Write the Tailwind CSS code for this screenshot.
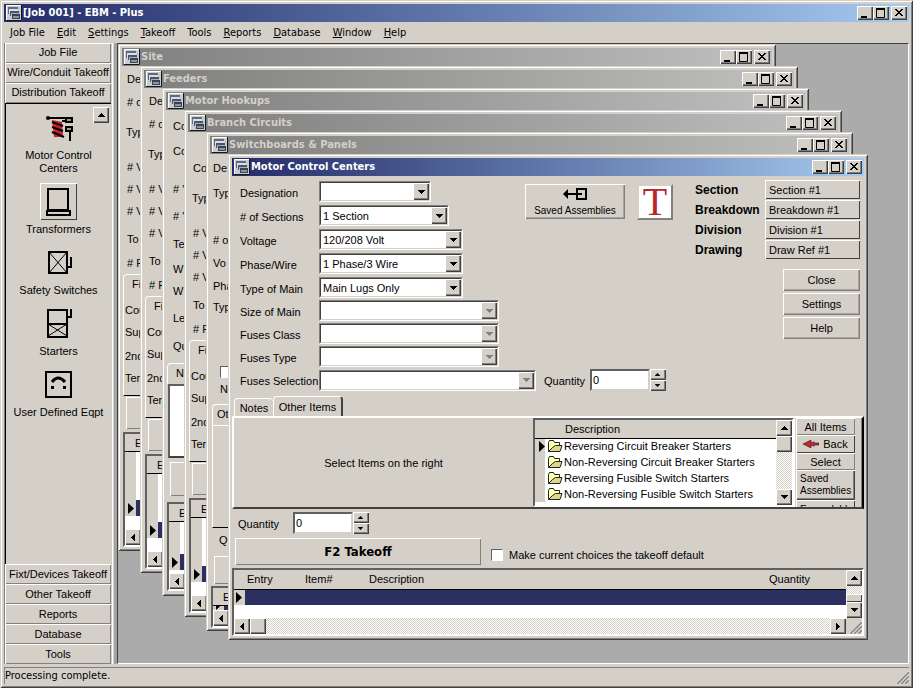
<!DOCTYPE html>
<html lang="en">
<head>
<meta charset="utf-8">
<title>[Job 001] - EBM - Plus</title>
<script src="https://cdn.jsdelivr.net/npm/@tailwindcss/browser@4"></script>
</head>
<body class="h-screen overflow-hidden bg-[#d4d0c8] font-['Liberation_Sans',Arial,sans-serif] text-[11px] leading-[14px] text-black">

<!-- Shared icons -->
<svg class="hidden" aria-hidden="true">
  <symbol id="form" viewBox="0 0 16 16"><path fill="#c9ccd0" d="M0 0h16v16H0z"/><path fill="none" stroke="#fff" d="M.5 15V.5H15"/><path fill="none" stroke="#15151c" d="M15.500 0v15.500H0"/><path fill="#5f6a80" d="M2 2h10v2H2zM2 4h1v5H2z"/><path fill="#dcdfe3" d="M3 4h9v4H3z"/><path fill="#4a5468" d="M4 6h9v2H4zM4 8h1v3H4z"/><path fill="#a9b0bc" d="M5 8h8v2H5z"/><path fill="#39424f" d="M6 9h8v2H6zM6 11h1v3H6zM13 11h1v3h-1zM7 13h6v1H7z"/><path fill="#8b94a3" d="M7 11h6v2H7z"/></symbol>
  <symbol id="min" viewBox="0 0 16 14"><path d="M4 10h6v2H4z"/></symbol>
  <symbol id="max" viewBox="0 0 16 14"><path fill="none" stroke="#000" d="M3.500 3v8.500h8V3"/><path d="M3 2h9v2H3z"/></symbol>
  <symbol id="cls" viewBox="0 0 16 14"><path d="M4 3h2v1h1v1h2V4h1V3h2v1h-1v1h-1v1H9v1h1v1h1v1h1v1h-2V9H9V8H7v1H6v1H4V9h1V8h1V7h1V6H6V5H5V4H4z"/></symbol>
  <symbol id="dn" viewBox="0 0 7 4"><path d="M0 0h7v1H6v1H5v1H4v1H3V3H2V2H1V1H0z"/></symbol>
  <symbol id="up" viewBox="0 0 7 4"><path d="M0 4h7V3H6V2H5V1H4V0H3v1H2v1H1v1H0z"/></symbol>
  <symbol id="lt" viewBox="0 0 4 7"><path d="M4 0v7H3V6H2V5H1V4H0V3h1V2h1V1h1V0z"/></symbol>
  <symbol id="rt" viewBox="0 0 4 7"><path d="M0 0v7h1V6h1V5h1V4h1V3H3V2H2V1H1V0z"/></symbol>
  <symbol id="row" viewBox="0 0 6 11"><path d="M0 0l6 5.500L0 11z"/></symbol>
  <symbol id="folder" viewBox="0 0 16 14"><path fill="#ffffb0" stroke="#222" d="M1.500 12.500v-9l1-2h4l1 2h5v3"/><path fill="#dcd88c" stroke="#222" d="M1.500 12.500l4-4 3-2h6.500l-2 6z"/></symbol>
  <symbol id="grip" viewBox="0 0 14 14"><path stroke="#fff" d="M1 14L14 1M5 14l9-9M9 14l5-5"/><path stroke="#808080" stroke-width="1.500" d="M2 14L14 2M6 14l8-8M10 14l4-4"/></symbol>
</svg>

<div class="flex h-full flex-col p-1 shadow-[inset_1px_1px_#d4d0c8,inset_-1px_-1px_#404040,inset_2px_2px_#fff,inset_-2px_-2px_#808080]">
  <header>
    <div class="flex h-[18px] items-center bg-linear-to-r from-[#262c68] to-[#a6caf0] px-0.5" data-title="[Job 001] - EBM - Plus"></div>
    <nav class="flex h-[21px] items-center gap-3 px-1.5 font-['DejaVu_Sans_Condensed','Noto_Sans',sans-serif] text-[11px]">
      <a href="#"><u>J</u>ob File</a><a href="#"><u>E</u>dit</a><a href="#"><u>S</u>ettings</a><a href="#"><u>T</u>akeoff</a><a href="#">Tools</a><a href="#"><u>R</u>eports</a><a href="#"><u>D</u>atabase</a><a href="#"><u>W</u>indow</a><a href="#"><u>H</u>elp</a>
    </nav>
  </header>

  <div class="flex min-h-0 flex-1">
    <aside class="flex w-[108px] shrink-0 flex-col border-l border-[#808080] pr-px">
      <button class="h-5 shrink-0 pb-0.5 whitespace-nowrap shadow-[inset_1px_1px_#fff,inset_-1px_-1px_#808080]">Job File</button>
      <button class="h-5 shrink-0 pb-0.5 whitespace-nowrap shadow-[inset_1px_1px_#fff,inset_-1px_-1px_#808080]">Wire/Conduit Takeoff</button>
      <button class="h-5 shrink-0 pb-0.5 whitespace-nowrap shadow-[inset_1px_1px_#fff,inset_-1px_-1px_#808080]">Distribution Takeoff</button>
      <div class="relative flex flex-1 flex-col items-center gap-2 border-t border-l border-black pt-[7px]">
        <button aria-label="Scroll up" class="absolute top-[3px] right-0.5 grid size-4 place-items-center shadow-[inset_1px_1px_#fff,inset_-1px_-1px_#404040,inset_-2px_-2px_#808080]"><svg class="h-1 w-[7px]"><use href="#up"/></svg></button>
        <button class="flex flex-col items-center gap-0.5 leading-[13px]">
          <svg class="h-9 w-[37px]" viewBox="0 0 37 36"><path fill="#c8202c" d="M12 9l10 2 1 15h-9z"/><path stroke="#000" stroke-width="2" fill="none" d="M7 7h25M12 11l11 4M12 16l11 4M12 21l12 5M30 21v9M25 19h4M25 10h-3"/><circle cx="8" cy="7" r="2"/><path fill="#8fae62" stroke="#000" stroke-width="2" d="M26 7h6v4h-6zM26 16h6v4h-6z"/></svg>
          <span>Motor Control<br>Centers</span></button>
        <button class="flex flex-col items-center gap-0.5">
          <span class="size-[37px] shadow-[inset_1px_1px_#fff,inset_-1px_-1px_#404040]"><svg viewBox="0 0 37 37"><path fill="none" stroke="#000" stroke-width="2" d="M8 6h20v21H8zM7 28h23v4H7z"/></svg></span>
          <span>Transformers</span></button>
        <button class="flex flex-col items-center gap-0.5">
          <svg class="size-[37px]" viewBox="0 0 37 37"><path fill="none" stroke="#000" stroke-width="2" d="M9 8h18v21H9zM27 23h4V13"/><path fill="none" stroke="#000" d="M9 8l18 21M27 8L9 29"/></svg>
          <span>Safety Switches</span></button>
        <button class="flex flex-col items-center gap-0.5">
          <svg class="size-[37px]" viewBox="0 0 37 37"><path fill="none" stroke="#000" stroke-width="2" d="M8 5h19v27H8zM8 19h19M27 12h4V4"/><path fill="none" stroke="#000" d="M8 19l19 12M27 19L8 31"/></svg>
          <span>Starters</span></button>
        <button class="flex flex-col items-center gap-0.5 whitespace-nowrap">
          <svg class="size-[37px]" viewBox="0 0 37 37"><path fill="none" stroke="#000" stroke-width="2" d="M6 6h25v25H6z"/><path fill="none" stroke="#000" stroke-width="3" d="M12 16q6-8 13 0"/><path d="M11 20h3v3h-3zM23 20h3v3h-3z"/></svg>
          <span>User Defined Eqpt</span></button>
      </div>
      <button class="h-5 shrink-0 whitespace-nowrap shadow-[inset_1px_1px_#fff,inset_-1px_-1px_#808080]">Fixt/Devices Takeoff</button>
      <button class="h-5 shrink-0 whitespace-nowrap shadow-[inset_1px_1px_#fff,inset_-1px_-1px_#808080]">Other Takeoff</button>
      <button class="h-5 shrink-0 whitespace-nowrap shadow-[inset_1px_1px_#fff,inset_-1px_-1px_#808080]">Reports</button>
      <button class="h-5 shrink-0 whitespace-nowrap shadow-[inset_1px_1px_#fff,inset_-1px_-1px_#808080]">Database</button>
      <button class="h-5 shrink-0 whitespace-nowrap shadow-[inset_1px_1px_#fff,inset_-1px_-1px_#808080]">Tools</button>
    </aside>
    <div class="w-[5px] shrink-0 border-r-3 border-l border-r-[#a4a4a4] border-l-white"></div>

    <!-- Desktop holding the child windows -->
    <main class="relative flex-1 overflow-hidden border border-t-[#404040] border-r-white border-b-white border-l-[#404040] bg-[#ababab]">
      <div id="back"></div>

      <section class="absolute top-[110px] left-[110px] w-[640px] bg-[#d4d0c8] p-1 shadow-[inset_1px_1px_#d4d0c8,inset_-1px_-1px_#404040,inset_2px_2px_#fff,inset_-2px_-2px_#808080]">
        <div class="flex h-[18px] items-center bg-linear-to-r from-[#262c68] to-[#a6caf0] px-0.5" data-title="Motor Control Centers"></div>

        <div class="flex pt-1 pr-1 pl-2">
          <div class="flex flex-col gap-0.5 pt-px">
            <div class="flex flex-col gap-[3px] pb-px" id="fieldsA"></div>
            <div class="flex flex-col gap-0.5" id="fieldsB"></div>
          </div>
          <div class="ml-[26px] flex gap-3 pt-1">
            <button class="flex h-[35px] w-[100px] flex-col items-center justify-between pt-1 pb-px text-[10px] whitespace-nowrap shadow-[inset_1px_1px_#fff,inset_-1px_-1px_#808080,inset_-2px_-2px_#a8a49c]">
              <svg class="h-3 w-6" viewBox="0 0 24 12"><path d="M0 6l5-5v10z"/><path fill="none" stroke="#000" stroke-width="2" d="M4 6h15M14 1h9v10h-9z"/></svg>
              Saved Assemblies</button>
            <button class="grid size-9 place-items-center border-2 border-[#d4d0c8] border-r-[#808080] border-b-[#808080] bg-white font-['Liberation_Serif',serif] text-[40px] leading-8 text-[#b8252c]">T</button>
          </div>
          <div class="ml-auto flex flex-col items-end gap-2.5">
            <div class="grid grid-cols-[70px_95px] items-center gap-y-px">
              <b class="text-[12px]">Section</b><button class="h-[19px] px-1 text-left shadow-[inset_1px_1px_#fff,inset_-1px_-1px_#404040]">Section #1</button>
              <b class="text-[12px]">Breakdown</b><button class="h-[19px] px-1 text-left shadow-[inset_1px_1px_#fff,inset_-1px_-1px_#404040]">Breakdown #1</button>
              <b class="text-[12px]">Division</b><button class="h-[19px] px-1 text-left shadow-[inset_1px_1px_#fff,inset_-1px_-1px_#404040]">Division #1</button>
              <b class="text-[12px]">Drawing</b><button class="h-[19px] px-1 text-left shadow-[inset_1px_1px_#fff,inset_-1px_-1px_#404040]">Draw Ref #1</button>
            </div>
            <div class="flex w-[77px] flex-col gap-0.5">
              <button class="h-[22px] shadow-[inset_1px_1px_#fff,inset_-1px_-1px_#808080,inset_-2px_-2px_#a8a49c]">Close</button>
              <button class="h-[22px] shadow-[inset_1px_1px_#fff,inset_-1px_-1px_#808080,inset_-2px_-2px_#a8a49c]">Settings</button>
              <button class="h-[22px] shadow-[inset_1px_1px_#fff,inset_-1px_-1px_#808080,inset_-2px_-2px_#a8a49c]">Help</button>
            </div>
          </div>
        </div>
        <div class="flex items-center gap-2 pt-0.5 pl-2">
          <div id="fieldsC"></div>
          <div data-qty="qty1" class="flex items-center gap-[5px]"></div>
        </div>

        <!-- Tabs -->
        <div class="flex items-end pt-[5px]">
          <button class="ml-0.5 h-[18px] w-[39px] rounded-t-sm border-t border-l border-white">Notes</button>
          <button class="h-5 w-[70px] rounded-t-sm border-t border-r-2 border-l border-white border-r-[#404040]">Other Items</button>
        </div>
        <div class="flex h-[93px] overflow-hidden border-2 border-t-white border-r-black border-b-[#404040] border-l-white">
          <p class="flex flex-1 items-center justify-center">Select Items on the right</p>
          <div class="flex h-[89px] w-[261px] border-2 border-t-[#606060] border-r-white border-b-white border-l-[#606060] bg-white">
            <table class="w-full flex-1 border-collapse self-start">
              <thead><tr class="h-[18px] border-b border-black bg-[#d4d0c8]"><th class="w-2.5"></th><th class="pl-5 text-left font-normal">Description</th></tr></thead>
              <tbody>
                <tr class="h-4"><td class="bg-[#d4d0c8] pl-1"><svg class="h-[11px] w-1.5"><use href="#row"/></svg></td><td class="pl-0.5"><span class="flex items-center gap-px whitespace-nowrap"><svg class="h-3.5 w-4"><use href="#folder"/></svg>Reversing Circuit Breaker Starters</span></td></tr>
                <tr class="h-4"><td class="bg-[#d4d0c8]"></td><td class="pl-0.5"><span class="flex items-center gap-px whitespace-nowrap"><svg class="h-3.5 w-4"><use href="#folder"/></svg>Non-Reversing Circuit Breaker Starters</span></td></tr>
                <tr class="h-4"><td class="bg-[#d4d0c8]"></td><td class="pl-0.5"><span class="flex items-center gap-px whitespace-nowrap"><svg class="h-3.5 w-4"><use href="#folder"/></svg>Reversing Fusible Switch Starters</span></td></tr>
                <tr class="h-4"><td class="bg-[#d4d0c8]"></td><td class="pl-0.5"><span class="flex items-center gap-px whitespace-nowrap"><svg class="h-3.5 w-4"><use href="#folder"/></svg>Non-Reversing Fusible Switch Starters</span></td></tr>
              </tbody>
            </table>
            <div class="flex w-4 flex-col bg-[conic-gradient(#fff_25%,#d4d0c8_0_50%,#fff_0_75%,#d4d0c8_0)] bg-[length:2px_2px]">
              <button aria-label="Scroll up" class="grid h-4 place-items-center bg-[#d4d0c8] shadow-[inset_1px_1px_#fff,inset_-1px_-1px_#404040,inset_-2px_-2px_#808080]"><svg class="h-1 w-[7px]"><use href="#up"/></svg></button>
              <div class="h-4 bg-[#d4d0c8] shadow-[inset_1px_1px_#fff,inset_-1px_-1px_#404040,inset_-2px_-2px_#808080]"></div>
              <button aria-label="Scroll down" class="mt-auto grid h-4 place-items-center bg-[#d4d0c8] shadow-[inset_1px_1px_#fff,inset_-1px_-1px_#404040,inset_-2px_-2px_#808080]"><svg class="h-1 w-[7px]"><use href="#dn"/></svg></button>
            </div>
          </div>
          <div class="flex w-[61px] flex-col border-l border-white pl-px">
            <button class="h-[17px] shrink-0 shadow-[inset_1px_1px_#fff,inset_-1px_-1px_#808080]">All Items</button>
            <button class="flex h-[18px] shrink-0 items-center justify-center gap-1 shadow-[inset_1px_1px_#fff,inset_-1px_-1px_#404040]"><svg class="h-2 w-4" viewBox="0 0 16 8"><path fill="#c8202c" stroke="#222" stroke-width=".6" d="M0 4l8-4v2.500h2l1-1v1.500h5v2h-5v1.500l-1-1H8V8z"/></svg>Back</button>
            <button class="h-[17px] shrink-0 shadow-[inset_1px_1px_#fff,inset_-1px_-1px_#808080]">Select</button>
            <button class="h-[30px] shrink-0 pl-1 text-left text-[10px] leading-3 shadow-[inset_1px_1px_#fff,inset_-1px_-1px_#404040,inset_-2px_-2px_#808080]">Saved<br>Assemblies</button>
            <button class="h-5 shrink-0 pl-1 text-left text-[10px] leading-3 shadow-[inset_1px_1px_#fff,inset_-1px_-1px_#404040]">Expandable</button>
          </div>
          <div class="w-[7px] border-r border-[#808080]"></div>
        </div>

        <div data-qty="qty2" class="flex items-center gap-[14px] pt-[3px] pl-1.5"></div>
        <div class="flex items-center gap-2.5 pt-1 pl-[3px]">
          <button class="h-[27px] w-[246px] font-['DejaVu_Sans_Condensed',sans-serif] text-[13px] font-bold shadow-[inset_1px_1px_#fff,inset_-1px_-1px_#808080]">F2 Takeoff</button>
          <label class="flex items-center gap-1.5 pt-1.5"><input type="checkbox" class="size-3 appearance-none border border-t-[#606060] border-r-white border-b-white border-l-[#606060] bg-white">Make current choices the takeoff default</label>
        </div>

        <div class="mt-[3px] flex border-2 border-t-[#606060] border-r-white border-b-white border-l-[#606060] bg-white">
          <div class="flex flex-1 flex-col">
            <table class="w-full table-fixed border-collapse">
              <thead><tr class="h-[19px] border-b border-black bg-[#d4d0c8] text-left"><th class="w-[11px]"></th><th class="w-[59px] pl-0.5 font-normal">Entry</th><th class="w-16 pl-px font-normal">Item#</th><th class="pl-px font-normal">Description</th><th class="w-[77px] font-normal">Quantity</th></tr></thead>
              <tbody><tr class="h-4"><td class="bg-[#d4d0c8] pl-0.5"><svg class="h-[11px] w-1.5"><use href="#row"/></svg></td><td colspan="4" class="bg-[#2b3061]"></td></tr></tbody>
            </table>
            <div class="mt-[13px] flex h-4 bg-[conic-gradient(#fff_25%,#d4d0c8_0_50%,#fff_0_75%,#d4d0c8_0)] bg-[length:2px_2px]">
              <button aria-label="Scroll left" class="grid w-4 place-items-center bg-[#d4d0c8] shadow-[inset_1px_1px_#fff,inset_-1px_-1px_#404040,inset_-2px_-2px_#808080]"><svg class="h-[7px] w-1"><use href="#lt"/></svg></button>
              <div class="w-4 bg-[#d4d0c8] shadow-[inset_1px_1px_#fff,inset_-1px_-1px_#404040,inset_-2px_-2px_#808080]"></div>
              <button aria-label="Scroll right" class="ml-auto grid w-4 place-items-center bg-[#d4d0c8] shadow-[inset_1px_1px_#fff,inset_-1px_-1px_#404040,inset_-2px_-2px_#808080]"><svg class="h-[7px] w-1"><use href="#rt"/></svg></button>
            </div>
          </div>
          <div class="flex w-4 flex-col bg-[conic-gradient(#fff_25%,#d4d0c8_0_50%,#fff_0_75%,#d4d0c8_0)] bg-[length:2px_2px]">
            <button aria-label="Scroll up" class="grid h-4 place-items-center bg-[#d4d0c8] shadow-[inset_1px_1px_#fff,inset_-1px_-1px_#404040,inset_-2px_-2px_#808080]"><svg class="h-1 w-[7px]"><use href="#up"/></svg></button>
            <div class="mt-auto h-2 bg-[#d4d0c8] shadow-[inset_1px_1px_#fff,inset_-1px_-1px_#404040]"></div>
            <button aria-label="Scroll down" class="grid h-4 place-items-center bg-[#d4d0c8] shadow-[inset_1px_1px_#fff,inset_-1px_-1px_#404040,inset_-2px_-2px_#808080]"><svg class="h-1 w-[7px]"><use href="#dn"/></svg></button>
            <div class="grid h-4 place-items-end bg-[#d4d0c8]"><svg class="size-3.5"><use href="#grip"/></svg></div>
          </div>
        </div>
      </section>
    </main>
  </div>

  <footer class="mt-[3px] flex h-[17px] shrink-0 items-center justify-between border-t border-l border-[#808080] font-['DejaVu_Sans_Condensed','Noto_Sans',sans-serif]">
    <span>Processing complete.</span><svg class="size-3.5 self-end"><use href="#grip"/></svg>
  </footer>
</div>

<script>
// Title bar contents: icon, caption and the three window buttons
const winBtn = (icon, label, extra = '') => `<button aria-label="${label}" class="h-3.5 w-4 bg-[#d4d0c8] shadow-[inset_1px_1px_#fff,inset_-1px_-1px_#404040,inset_-2px_-2px_#808080] ${extra}"><svg class="h-3.5 w-4"><use href="#${icon}"/></svg></button>`;
const titleBar = (text, color) => `<svg class="size-4 shrink-0"><use href="#form"/></svg><h2 class="flex-1 truncate pl-px font-['DejaVu_Sans_Condensed',sans-serif] text-[11px] font-bold ${color}">${text}</h2>` + winBtn('min', 'Minimize') + winBtn('max', 'Maximize') + winBtn('cls', 'Close', 'ml-0.5');
document.querySelectorAll('[data-title]').forEach(el => { el.innerHTML = titleBar(el.dataset.title, 'text-white'); });

// Labelled drop-downs
const field = ([label, width, value, off], i, id) => `<div class="flex items-center"><label for="${id}${i}" class="w-[79px] pt-0.5 whitespace-nowrap">${label}</label>
  <div class="relative ${width} border border-t-[#808080] border-r-white border-b-white border-l-[#808080]">
  <select id="${id}${i}" class="block h-[19px] w-full appearance-none border border-t-[#404040] border-r-[#d4d0c8] border-b-[#d4d0c8] border-l-[#404040] bg-white pl-0.5 opacity-100" ${off ? 'disabled' : ''}><option>${value}</option></select>
  <span class="pointer-events-none absolute top-px right-px grid h-[17px] w-4 place-items-center bg-[#d4d0c8] shadow-[inset_1px_1px_#fff,inset_-1px_-1px_#404040,inset_-2px_-2px_#808080] ${off ? 'fill-[#808080]' : 'fill-black'}"><svg class="h-1 w-[7px]"><use href="#dn"/></svg></span></div></div>`;
const fill = (id, rows) => { document.getElementById(id).innerHTML = rows.map((r, i) => field(r, i, id)).join(''); };
fill('fieldsA', [['Designation', 'w-[112px]', ''], ['# of Sections', 'w-[130px]', '1 Section'], ['Voltage', 'w-36', '120/208 Volt'], ['Phase/Wire', 'w-36', '1 Phase/3 Wire']]);
fill('fieldsB', [['Type of Main', 'w-36', 'Main Lugs Only'], ['Size of Main', 'w-[180px]', '', 1], ['Fuses Class', 'w-[180px]', '', 1], ['Fuses Type', 'w-[180px]', '', 1]]);
fill('fieldsC', [['Fuses Selection', 'w-[217px]', '', 1]]);

// Quantity boxes with spin buttons
document.querySelectorAll('[data-qty]').forEach(el => {
  const id = el.dataset.qty;
  el.innerHTML = `<label for="${id}" class="pt-0.5">Quantity</label><div class="flex h-[22px]">
  <input id="${id}" value="0" class="w-[60px] border-2 border-t-[#606060] border-r-[#d4d0c8] border-b-[#d4d0c8] border-l-[#606060] bg-white pl-px">
  <div class="flex w-4 flex-col"><button aria-label="Increase" class="grid h-[11px] place-items-center shadow-[inset_1px_1px_#fff,inset_-1px_-1px_#404040,inset_-2px_-2px_#808080]"><svg class="h-[3px] w-[5px]" viewBox="0 0 7 4"><use href="#up"/></svg></button><button aria-label="Decrease" class="grid h-[11px] place-items-center shadow-[inset_1px_1px_#fff,inset_-1px_-1px_#404040,inset_-2px_-2px_#808080]"><svg class="h-[3px] w-[5px]" viewBox="0 0 7 4"><use href="#dn"/></svg></button></div></div>`;
});

// Windows stacked behind the active one; only the left strip of each body shows
const line = ([text, mt, pad = 'pl-[5px]']) => `<div class="${mt} ${pad} whitespace-nowrap">${text}</div>`;
const grid = (mt, h, gap) => `<div class="${mt} ml-px flex flex-col border-2 border-r-0 border-t-[#606060] border-b-white border-l-[#606060] bg-white">
  <div class="h-[18px] border-b border-black bg-[#d4d0c8] pt-0.5 pl-[10px]">E</div>
  <div class="flex ${h} flex-col justify-end bg-linear-to-r from-[#d4d0c8] from-[11px] to-white to-[11px]"><div class="flex h-4 items-center bg-linear-to-r from-[#d4d0c8] from-[11px] to-[#2b3061] to-[11px]"><svg class="ml-[3px] h-[11px] w-1.5"><use href="#row"/></svg></div></div>
  <div class="${gap} h-4 bg-[#d4d0c8]"><span class="grid size-4 place-items-center shadow-[inset_1px_1px_#fff,inset_-1px_-1px_#404040,inset_-2px_-2px_#808080]"><svg class="h-[7px] w-1"><use href="#lt"/></svg></span></div></div>`;
const box = (mt, h) => `<div class="${mt} ${h} ml-1 shadow-[inset_1px_1px_#fff,inset_0_-1px_#808080]"></div>`;
const feederTail = `<div class="mt-1 ml-px h-[122px] rounded-tl-sm border border-r-0 border-t-white border-l-white border-b-black pt-0.5">`
  + [['Fi', '', 'pl-2'], ['Cou', 'mt-3', 'pl-px'], ['Sup', 'mt-2', 'pl-px'], ['2nd', 'mt-2.5', 'pl-px'], ['Ter', 'mt-2', 'pl-px']].map(line).join('')
  + `</div>` + box('mt-px', 'h-8') + grid('mt-[3px]', 'h-16', 'mt-[13px]');
const feederWires = [['# V', 'mt-[21px]'], ['# V', 'mt-2'], ['# V', 'mt-2'], ['To', 'mt-3.5'], ['# F', 'mt-2.5']];
const feeder = [['De', 'pt-1.5'], ['# o', 'mt-[9px]'], ['Typ', 'mt-4', 'pl-1'], ...feederWires].map(line).join('') + feederTail;
const branch = [['Co', 'pt-[29px]'], ['Typ', 'mt-4', 'pl-1'], ...feederWires].map(line).join('') + feederTail;
const motor = [['Co', 'pt-[9px]', 'pl-[7px]'], ['Co', 'mt-[11px]', 'pl-[7px]'], ["# '", 'mt-6', 'pl-[7px]'], ["# '", 'mt-[13px]', 'pl-[7px]'], ['Te', 'mt-3.5', 'pl-[7px]'], ['W', 'mt-[11px]', 'pl-[7px]'], ['W', 'mt-2', 'pl-[7px]'], ['Le', 'mt-[13px]', 'pl-[7px]'], ['Qu', 'mt-3.5', 'pl-[7px]']].map(line).join('')
  + `<div class="mt-[10px] ml-px h-[21px] rounded-tl-sm border-t border-l border-white pt-0.5 pl-2">N</div><div class="ml-0.5 h-[74px] border-2 border-r-0 border-t-[#606060] border-b-[#404040] border-l-[#606060] bg-white"></div>` + box('mt-1', 'h-[34px]') + grid('mt-1.5', 'h-12', 'mt-[3px]');
const board = [['De:', 'pt-[7px]', 'pl-[3px]'], ['Typ', 'mt-[11px]', 'pl-[3px]'], ['# o', 'mt-[33px]', 'pl-[3px]'], ['Vo', 'mt-[9px]', 'pl-[3px]'], ['Pha', 'mt-[9px]', 'pl-[3px]'], ['Typ', 'mt-[7px]', 'pl-[3px]']].map(line).join('')
  + `<div class="mt-[52px] ml-2.5 size-3 border border-t-[#606060] border-l-[#606060] border-r-white border-b-white bg-white"></div><div class="mt-1 pl-2.5">N</div><div class="mt-2 ml-0.5 h-[21px] rounded-tl-sm border-t border-l border-white pt-0.5 pl-1">Ot</div><div class="ml-0.5 h-[103px] border border-r-0 border-t-white border-l-white border-b-black"></div><div class="mt-[5px] pl-[9px]">Q</div>` + box('mt-[9px]', 'h-7') + grid('mt-0.5', 'h-1 overflow-hidden', '');
const wins = [
  ['Site', 'top-0 left-0 w-[658px] h-[507px]', feeder],
  ['Feeders', 'top-[22px] left-[22px] w-[658px] h-[507px]', feeder],
  ['Motor Hookups', 'top-11 left-11 w-[647px] h-[508px]', motor],
  ['Branch Circuits', 'top-[66px] left-[66px] w-[658px] h-[507px]', branch],
  ['Switchboards &amp; Panels', 'top-[88px] left-[88px] w-[647px] h-[499px]', board]
];
document.getElementById('back').innerHTML = wins.map(([t, pos, body]) => `<section class="absolute ${pos} overflow-hidden bg-[#d4d0c8] p-1 shadow-[inset_1px_1px_#d4d0c8,inset_-1px_-1px_#404040,inset_2px_2px_#fff,inset_-2px_-2px_#808080]"><div class="flex h-[18px] items-center bg-linear-to-r from-[#808080] to-[#c0c0c0] px-0.5">${titleBar(t, 'text-[#d4d0c8]')}</div><div class="w-[18px]">${body}</div></section>`).join('');
</script>
</body>
</html>
